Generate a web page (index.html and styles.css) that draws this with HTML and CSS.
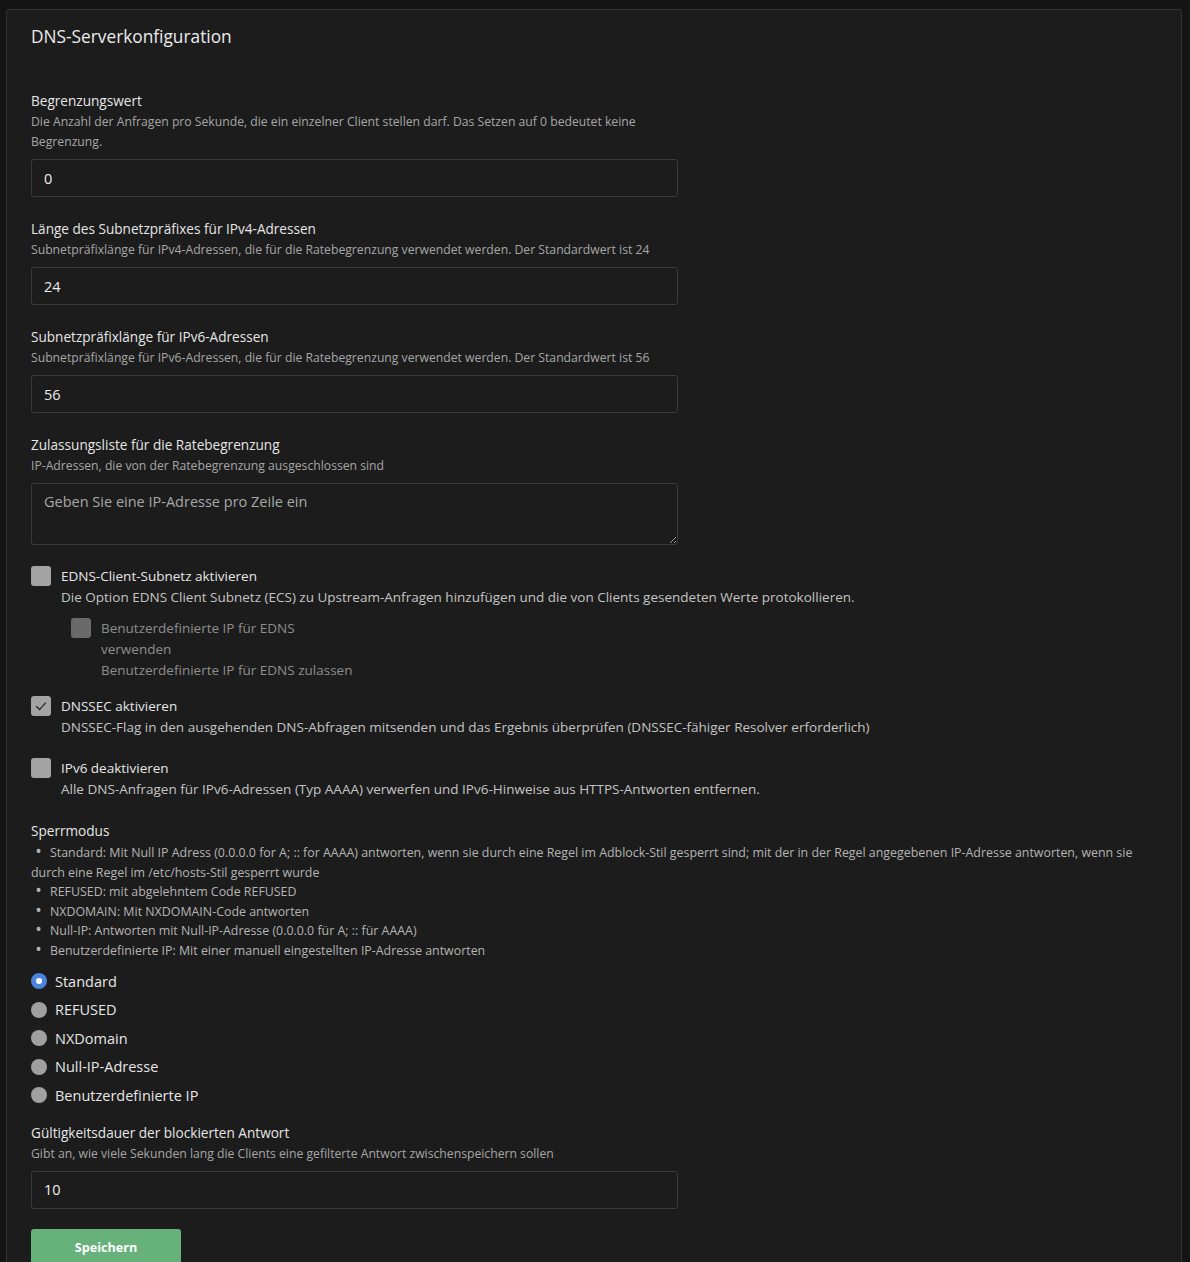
FILE: index.html
```html
<!DOCTYPE html>
<html lang="de">
<head>
    <meta charset="UTF-8">
    <meta name="viewport" content="width=device-width, initial-scale=1.0">
    <title>DNS-Serverkonfiguration</title>
    <link rel="stylesheet" href="styles.css">
</head>
<body>
    <div class="card">
        <div class="card-header">DNS-Serverkonfiguration</div>
        <form class="card-body">
            <div class="form-group">
                <div class="form-label">Begrenzungswert</div>
                <div class="form-desc">Die Anzahl der Anfragen pro Sekunde, die ein einzelner Client stellen darf. Das Setzen auf 0 bedeutet keine Begrenzung.</div>
                <input class="form-control" type="text" value="0">
            </div>
            <div class="form-group">
                <div class="form-label">Länge des Subnetzpräfixes für IPv4-Adressen</div>
                <div class="form-desc">Subnetpräfixlänge für IPv4-Adressen, die für die Ratebegrenzung verwendet werden. Der Standardwert ist 24</div>
                <input class="form-control" type="text" value="24">
            </div>
            <div class="form-group">
                <div class="form-label">Subnetzpräfixlänge für IPv6-Adressen</div>
                <div class="form-desc">Subnetpräfixlänge für IPv6-Adressen, die für die Ratebegrenzung verwendet werden. Der Standardwert ist 56</div>
                <input class="form-control" type="text" value="56">
            </div>
            <div class="form-group">
                <div class="form-label">Zulassungsliste für die Ratebegrenzung</div>
                <div class="form-desc">IP-Adressen, die von der Ratebegrenzung ausgeschlossen sind</div>
                <textarea class="form-control textarea" placeholder="Geben Sie eine IP-Adresse pro Zeile ein"></textarea>
            </div>

            <div class="check">
                <div class="check-row">
                    <span class="box"></span>
                    <span class="check-label">EDNS-Client-Subnetz aktivieren</span>
                </div>
                <div class="check-desc">Die Option EDNS Client Subnetz (ECS) zu Upstream-Anfragen hinzufügen und die von Clients gesendeten Werte protokollieren.</div>
                <div class="check nested disabled">
                    <div class="check-row">
                        <span class="box"></span>
                        <span class="check-label narrow">Benutzerdefinierte IP für EDNS verwenden</span>
                    </div>
                    <div class="check-desc">Benutzerdefinierte IP für EDNS zulassen</div>
                </div>
            </div>

            <div class="check tight">
                <div class="check-row">
                    <span class="box">
                        <svg width="20" height="20" viewBox="0 0 20 20"><path d="M5.2 10.2 L8.6 13.6 L14.8 6.6" fill="none" stroke="#2a2a2a" stroke-width="1.4"/></svg>
                    </span>
                    <span class="check-label">DNSSEC aktivieren</span>
                </div>
                <div class="check-desc">DNSSEC-Flag in den ausgehenden DNS-Abfragen mitsenden und das Ergebnis überprüfen (DNSSEC-fähiger Resolver erforderlich)</div>
            </div>

            <div class="check">
                <div class="check-row">
                    <span class="box"></span>
                    <span class="check-label">IPv6 deaktivieren</span>
                </div>
                <div class="check-desc">Alle DNS-Anfragen für IPv6-Adressen (Typ AAAA) verwerfen und IPv6-Hinweise aus HTTPS-Antworten entfernen.</div>
            </div>

            <div class="form-group modes">
                <div class="form-label">Sperrmodus</div>
                <ul class="mode-list">
                    <li>Standard: Mit Null IP Adress (0.0.0.0 for A; :: for AAAA) antworten, wenn sie durch eine Regel im Adblock-Stil gesperrt sind; mit der in der Regel angegebenen IP-Adresse antworten, wenn sie durch eine Regel im /etc/hosts-Stil gesperrt wurde</li>
                    <li>REFUSED: mit abgelehntem Code REFUSED</li>
                    <li>NXDOMAIN: Mit NXDOMAIN-Code antworten</li>
                    <li>Null-IP: Antworten mit Null-IP-Adresse (0.0.0.0 für A; :: für AAAA)</li>
                    <li>Benutzerdefinierte IP: Mit einer manuell eingestellten IP-Adresse antworten</li>
                </ul>
                <div class="radios">
                    <div class="radio checked"><span class="dot"></span>Standard</div>
                    <div class="radio"><span class="dot"></span>REFUSED</div>
                    <div class="radio"><span class="dot"></span>NXDomain</div>
                    <div class="radio"><span class="dot"></span>Null-IP-Adresse</div>
                    <div class="radio"><span class="dot"></span>Benutzerdefinierte IP</div>
                </div>
            </div>

            <div class="form-group last">
                <div class="form-label">Gültigkeitsdauer der blockierten Antwort</div>
                <div class="form-desc">Gibt an, wie viele Sekunden lang die Clients eine gefilterte Antwort zwischenspeichern sollen</div>
                <input class="form-control" type="text" value="10">
            </div>

            <button class="btn-save" type="button">Speichern</button>
        </form>
    </div>
</body>
</html>
```

FILE: styles.css
```css
body {
    margin: 0;
    padding: 9px 8px 0 6px;
    background: #141414;
    font-family: "Open Sans", "Noto Sans", sans-serif;
    color: #e2e2e2;
}
.card {
    background: #1c1c1c;
    border: 1px solid #333;
    border-radius: 3px;
    padding: 0 24px 40px;
}
.card-header {
    padding-top: 15px;
    font-size: 17.3px;
    line-height: 24px;
    color: #ececec;
}
.card-body {
    padding-top: 41px;
}
.form-group {
    margin-bottom: 21px;
}
.form-group.last {
    margin-bottom: 20px;
}
.form-label {
    font-size: 13.6px;
    line-height: 22px;
    color: #e6e6e6;
}
.form-desc {
    font-size: 12.2px;
    line-height: 20px;
    color: #a6a6a6;
    max-width: 640px;
    margin-bottom: 7px;
}
.form-control {
    display: block;
    box-sizing: border-box;
    width: 647px;
    height: 38px;
    margin: 0;
    padding: 0 12px;
    background: #1c1c1c;
    border: 1px solid #3a3a3a;
    border-radius: 3px;
    font-family: inherit;
    font-size: 14.5px;
    color: #ececec;
}
.textarea {
    height: 62px;
    padding-top: 8px;
    resize: vertical;
}
.textarea::placeholder {
    color: #a8a8a8;
}
.check {
    margin-bottom: 20px;
}
.check.tight {
    margin-top: -5px;
}
.check-row {
    display: flex;
    align-items: flex-start;
    gap: 10px;
}
.box {
    flex: none;
    width: 20px;
    height: 20px;
    border-radius: 3px;
    background: #a3a3a3;
}
.box svg {
    display: block;
}
.check-label {
    font-size: 13.5px;
    line-height: 21px;
    color: #e6e6e6;
}
.check-label.narrow {
    width: 210px;
}
.check-desc {
    padding-left: 30px;
    font-size: 13.5px;
    line-height: 21px;
    color: #c4c4c4;
}
.check.nested {
    margin: 10px 0 0 40px;
}
.disabled .box {
    background: #6a6a6a;
}
.disabled .check-label,
.disabled .check-desc {
    color: #8e8e8e;
}
.mode-list {
    list-style: none;
    margin: 1px 0 7px;
    padding: 0;
    font-size: 12.4px;
    line-height: 19.5px;
    color: #b4b4b4;
}
.mode-list li::before {
    content: "•";
    display: inline-block;
    margin-left: 5px;
    width: 14px;
    transform: scale(1.4);
    transform-origin: 2px 55%;
}
.modes {
    margin-bottom: 12px;
}
.radio {
    display: flex;
    align-items: center;
    gap: 8px;
    height: 28.5px;
    font-size: 14.5px;
    color: #e6e6e6;
}
.dot {
    box-sizing: border-box;
    width: 16px;
    height: 16px;
    border-radius: 50%;
    background: #a0a0a0;
}
.radio.checked .dot {
    border: 5px solid #4a84dc;
    background: #fff;
}
.btn-save {
    display: block;
    width: 150px;
    height: 38px;
    background: #66b27a;
    border: none;
    border-radius: 3px;
    font-family: inherit;
    font-size: 12.6px;
    font-weight: 700;
    color: #fff;
    cursor: pointer;
}
```
